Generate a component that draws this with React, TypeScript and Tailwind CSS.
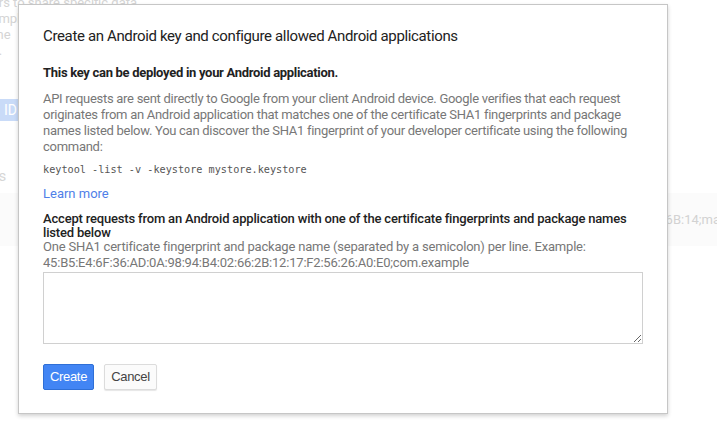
import React from 'react';

const roboto = { fontFamily: 'Roboto, "Noto Sans", sans-serif' };

function Backdrop() {
  return (
    <div className="relative h-[427px] w-[717px] overflow-hidden bg-white text-[13px] leading-[16px] text-[#d4d4d4]" style={roboto}>
      <div className="ml-[-22px] flex flex-col">
        <div className="mt-[-5px]">users to share specific data</div>
        <div>example,</div>
        <div>name</div>
        <div>use.</div>
      </div>
      <div className="mt-[40px] flex h-[22px] w-[80px] items-center bg-[#c9dbf8] pl-[4px] text-[14px] text-white">ID</div>
      <div className="mt-[47px] ml-[-10px] text-[15px] text-[#d6d6d6]">ps</div>
      <div className="mt-[8px] ml-[-8px] flex flex-col leading-[15.5px]">
        <span>is not</span>
        <span>not get</span>
        <span>tion, and</span>
      </div>
      <div className="absolute left-0 right-0 top-[193px] flex h-[53px] items-center justify-end bg-[#fbfbfb]">
        <span className="mr-[-3px] text-[#d2d2d2]">6B:14;ma</span>
      </div>
    </div>
  );
}

function Dialog() {
  return (
    <div
      className="absolute left-[18px] top-[4px] w-[650px] border border-[#c6c6c6] bg-white px-[24px] pb-[23px] pt-[21px] shadow-[0_2px_4px_rgba(0,0,0,0.18)]"
      style={roboto}
    >
      <div className="text-[15px] leading-[20px] tracking-[-0.36px] text-[#222]">
        Create an Android key and configure allowed Android applications
      </div>
      <div className="mt-[19px] text-[13px] font-bold leading-[16px] tracking-[-0.3px] text-[#222]">
        This key can be deployed in your Android application.
      </div>
      <p className="mt-[10px] whitespace-nowrap text-[13px] leading-[16px] tracking-[-0.28px] text-[#777]">
        API requests are sent directly to Google from your client Android device. Google verifies that each request
        <br />
        originates from an Android application that matches one of the certificate SHA1 fingerprints and package
        <br />
        names listed below. You can discover the SHA1 fingerprint of your developer certificate using the following
        <br />
        command:
      </p>
      <div className="mt-[7px] text-[10.2px] leading-[16px] text-[#555]" style={{ fontFamily: '"DejaVu Sans Mono", monospace' }}>
        keytool -list -v -keystore mystore.keystore
      </div>
      <div className="mt-[8px] text-[13px] leading-[16px] text-[#4f7fe8]">Learn more</div>
      <div className="mt-[10px] whitespace-nowrap text-[13px] font-medium leading-[13.5px] tracking-[-0.18px] text-[#222]">
        Accept requests from an Android application with one of the certificate fingerprints and package names
        <br />
        listed below
      </div>
      <div className="mt-[-0.5px] whitespace-nowrap text-[13px] leading-[16px] tracking-[-0.2px] text-[#777]">
        One SHA1 certificate fingerprint and package name (separated by a semicolon) per line. Example:
        <br />
        45:B5:E4:6F:36:AD:0A:98:94:B4:02:66:2B:12:17:F2:56:26:A0:E0;com.example
      </div>
      <textarea className="mt-[1px] block h-[72px] w-full border border-[#d0d0d0] outline-none" />
      <div className="mt-[20px] flex gap-[10px]" style={{ fontFamily: '"Liberation Sans", Arial, sans-serif' }}>
        <button className="h-[26px] w-[51px] rounded-[2px] border border-[#2f6fd6] bg-[#4285f4] text-[13px] tracking-[-0.3px] text-white">
          Create
        </button>
        <button className="h-[26px] w-[53px] rounded-[2px] border border-[#dcdcdc] bg-[#fbfbfb] text-[13px] tracking-[-0.3px] text-[#444] shadow-[0_1px_1px_rgba(0,0,0,0.1)]">
          Cancel
        </button>
      </div>
    </div>
  );
}

export default function App() {
  return (
    <div className="relative h-[427px] w-[717px] overflow-hidden">
      <Backdrop />
      <Dialog />
    </div>
  );
}
